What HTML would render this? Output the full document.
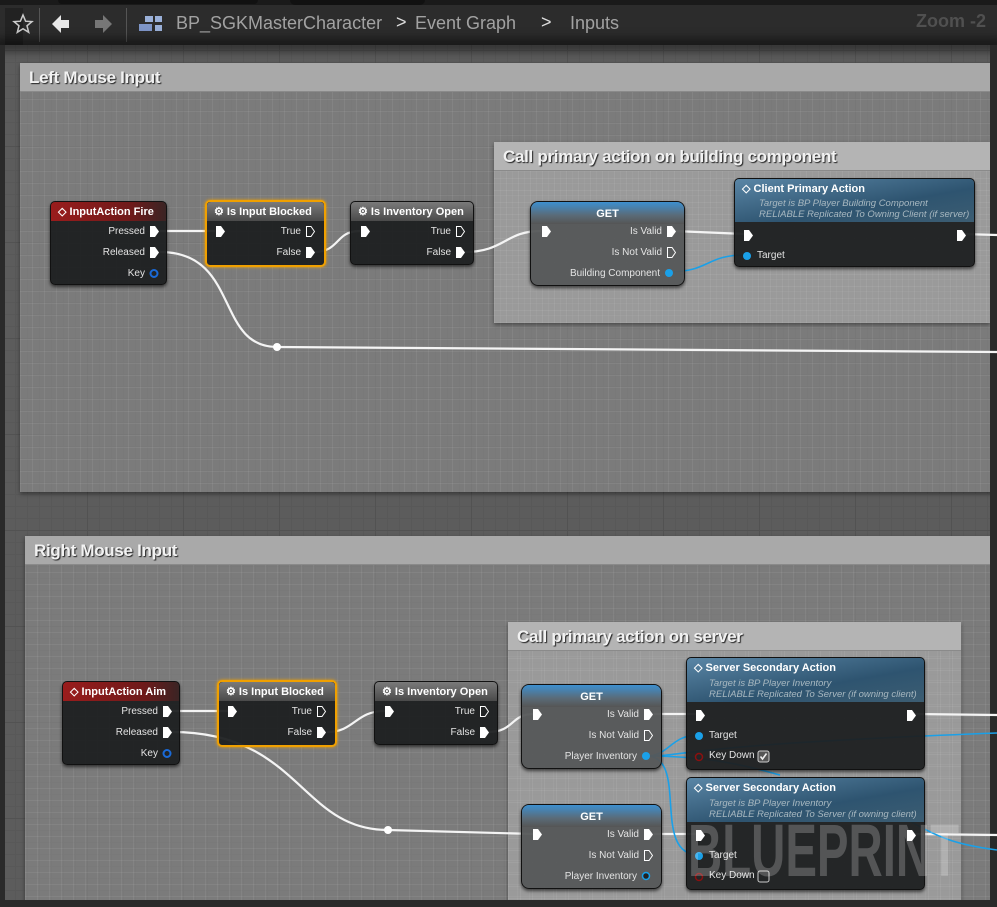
<!DOCTYPE html>
<html><head><meta charset="utf-8"><style>
*{margin:0;padding:0;box-sizing:border-box}
body{width:997px;height:907px;overflow:hidden;background:#1c1c1c;font-family:"Liberation Sans",sans-serif;position:relative}
.abs{position:absolute}
#graph{position:absolute;left:5px;top:45px;width:985px;height:862px;background-color:#5c5c5c;
background-image:linear-gradient(#525252 1px,transparent 1px),linear-gradient(90deg,#525252 1px,transparent 1px),linear-gradient(#585858 1px,transparent 1px),linear-gradient(90deg,#585858 1px,transparent 1px);
background-size:96px 96px,96px 96px,12px 12px,12px 12px;background-position:-14px 5px,-14px 5px,-14px 5px,-14px 5px}
.cm{position:absolute;background-color:rgba(150,150,150,.55);
background-image:linear-gradient(rgba(255,255,255,.06) 1px,transparent 1px),linear-gradient(90deg,rgba(255,255,255,.06) 1px,transparent 1px);background-size:12px 12px;box-shadow:0 2px 4px rgba(0,0,0,.4)}
.cm .ch{position:absolute;left:0;right:0;top:0;height:29px;background:#a9a9a9;border-bottom:1px solid #8a8a8a;color:#f2f2f2;font-weight:bold;font-size:17px;padding:5px 0 0 9px;text-shadow:1px 1px 1px #222;letter-spacing:-0.3px}
.n{position:absolute;background:rgba(30,32,33,.95);border:1px solid #111;border-radius:5px;box-shadow:0 2px 3px rgba(0,0,0,.6);color:#ddd;font-size:10px}
.n .h{height:19px;border-radius:4px 4px 0 0;font-weight:bold;font-size:11px;color:#fff;padding:3px 0 0 7px;white-space:nowrap}
.red{background:linear-gradient(90deg,#9a1c1c,#6e1a1a 70%,#3a2424)}
.gry{background:linear-gradient(#7a7a7a,#4a4a4a)}
.blu{background:linear-gradient(170deg,#5a86a6,#2e5470 60%,#3c5d72)}
.sel{border:2px solid #f0a000;box-shadow:0 0 3px #f0a000}
.get{background:rgba(85,87,88,.95);border-radius:8px}
.get .gh{height:22px;border-radius:7px 7px 0 0;background:linear-gradient(#3d8fcf,#5a6b78 60%,#555);color:#fff;font-weight:bold;font-size:11px;text-align:center;padding-top:6px}
.l{position:absolute;white-space:nowrap;font-size:10px;color:#e4e4e4}
.r{text-align:right}
.sub{position:absolute;font-style:italic;font-size:9.5px;color:#a8b8c0;line-height:11px;white-space:nowrap}
svg.p{position:absolute}
</style></head><body>
<div class="abs" style="left:0;top:0;width:997px;height:45px;background:#2c2c2c"></div>
<div class="abs" style="left:0;top:0;width:997px;height:5px;background:#1a1a1a"></div>
<div class="abs" style="left:58px;top:0;width:200px;height:4px;background:#111;border-radius:0 0 8px 8px"></div>
<div class="abs" style="left:290px;top:0;width:135px;height:5px;background:#111;border-radius:0 0 8px 8px"></div>
<div class="abs" style="left:5px;top:8px;width:18px;height:37px;background:#222"></div>
<svg class="abs" style="left:12px;top:13px" width="22" height="22" viewBox="0 0 22 22"><path d="M11 2 L13.6 8.2 L20 8.6 L15 12.8 L16.7 19.3 L11 15.7 L5.3 19.3 L7 12.8 L2 8.6 L8.4 8.2 Z" fill="none" stroke="#ccc" stroke-width="1.5"/></svg>
<div class="abs" style="left:39px;top:8px;width:1px;height:34px;background:#555"></div>
<svg class="abs" style="left:50px;top:13px" width="22" height="22"><path d="M2 11 L11 2 L11 7 L19 7 L19 15 L11 15 L11 20 Z" fill="#e8e8e8"/></svg>
<svg class="abs" style="left:92px;top:13px" width="22" height="22"><path d="M20 11 L11 2 L11 7 L3 7 L3 15 L11 15 L11 20 Z" fill="#777"/></svg>
<div class="abs" style="left:126px;top:8px;width:1px;height:34px;background:#555"></div>
<svg class="abs" style="left:138px;top:14px" width="26" height="20"><rect x="7" y="2" width="8" height="6" fill="#9ab0d8"/><rect x="17" y="2" width="7" height="6" fill="#9ab0d8"/><rect x="1" y="10" width="13" height="7" fill="#7e96c8"/><rect x="17" y="11" width="7" height="6" fill="#9ab0d8"/></svg>
<div class="abs" style="left:176px;top:13px;font-size:18px;color:#a2a2a2">BP_SGKMasterCharacter</div>
<div class="abs" style="left:396px;top:12px;font-size:18px;color:#ddd">&gt;</div>
<div class="abs" style="left:415px;top:13px;font-size:18px;color:#a2a2a2">Event Graph</div>
<div class="abs" style="left:541px;top:12px;font-size:18px;color:#ddd">&gt;</div>
<div class="abs" style="left:570px;top:13px;font-size:18px;color:#a2a2a2">Inputs</div>

<div id="graph"></div>
<div class="abs" style="left:0;top:45px;width:997px;height:0;box-shadow:0 0 10px 6px rgba(0,0,0,.5)"></div>
<div class="abs" style="left:916px;top:11px;font-size:18px;font-weight:bold;color:#505050">Zoom -2</div>

<div class="cm" style="left:20px;top:63px;width:977px;height:429px"><div class="ch">Left Mouse Input</div></div>
<div class="cm" style="left:494px;top:142px;width:496px;height:181px;background-color:rgba(180,180,180,.55)"><div class="ch" style="background:#b4b4b4">Call primary action on building component</div></div>
<div class="cm" style="left:25px;top:536px;width:965px;height:371px"><div class="ch">Right Mouse Input</div></div>
<div class="cm" style="left:508px;top:622px;width:453px;height:285px;background-color:rgba(180,180,180,.55)"><div class="ch" style="background:#b4b4b4">Call primary action on server</div></div>
<div class="abs" style="left:990px;top:45px;width:7px;height:862px;background:#2a2a2a"></div>
<div class="abs" style="left:0;top:45px;width:5px;height:862px;background:#2a2a2a"></div>
<div class="abs" style="left:0;top:900px;width:997px;height:7px;background:#2a2a2a"></div>

<svg class="abs" style="left:0;top:0;z-index:1" width="997" height="907" fill="none">
<g stroke="#f4f4f4" stroke-width="2.2">
<path d="M160 231 L215 231"/>
<path d="M160 252 C240 252 215 347 277 347 L997 352"/>
<path d="M314 252 C340 252 335 231 360 231"/>
<path d="M464 252 C505 252 505 231 541 231"/>
<path d="M674 231 L745 234"/>
<path d="M962 234 L997 235"/>
<path d="M172 711 L228 711"/>
<path d="M172 732 C300 732 300 830 388 830 L534 834"/>
<path d="M327 732 C355 732 355 711 385 711"/>
<path d="M488 732 C515 732 510 714 534 714"/>
<path d="M654 714 L697 714"/>
<path d="M654 834 L697 834"/>
<path d="M914 714 L997 715"/>
<path d="M914 834 L997 835"/>
</g>
<circle cx="277" cy="347" r="4" fill="#fff"/>
<circle cx="388" cy="830" r="4" fill="#fff"/>
<g stroke="#1aa0e8" stroke-width="1.6">
<path d="M668 272 C710 272 705 255 745 255"/>
<path d="M646 756 C670 756 670 735 699 735"/>
<path d="M646 756 C690 756 680 745 997 733"/>
<path d="M646 756 C690 756 650 855 699 855"/>
<path d="M646 756 C720 756 760 770 780 775"/>
<path d="M900 815 C940 840 960 845 997 850"/>
</g>
</svg>

<div style="position:relative;z-index:2">
<div class="n" style="left:50px;top:201px;width:117px;height:84px"><div class="h red">◇ InputAction Fire</div>
<div class="l r" style="right:21px;top:24px">Pressed</div><div class="l r" style="right:21px;top:45px">Released</div><div class="l r" style="right:21px;top:66px">Key</div>
<svg class="p" style="right:7px;top:24px" width="9" height="11"><path d="M0 0H5L9 5.5L5 11H0Z" fill="#fff"/></svg>
<svg class="p" style="right:7px;top:45px" width="9" height="11"><path d="M0 0H5L9 5.5L5 11H0Z" fill="#fff"/></svg>
<svg class="p" style="right:6px;top:66px" width="11" height="11"><circle cx="5" cy="5.5" r="3.5" stroke="#1a6ad8" stroke-width="2" fill="none"/></svg>
</div>
<div class="n sel" style="left:205px;top:200px;width:121px;height:67px"><div class="h gry">⚙ Is Input Blocked</div>
<svg class="p" style="left:9px;top:24px" width="9" height="11"><path d="M0 0H5L9 5.5L5 11H0Z" fill="#fff"/></svg>
<div class="l r" style="right:23px;top:24px">True</div><div class="l r" style="right:23px;top:45px">False</div>
<svg class="p" style="right:9px;top:24px" width="9" height="11"><path d="M.5 .5H5L8.5 5.5L5 10.5H.5Z" fill="none" stroke="#fff"/></svg>
<svg class="p" style="right:9px;top:45px" width="9" height="11"><path d="M0 0H5L9 5.5L5 11H0Z" fill="#fff"/></svg>
</div>
<div class="n" style="left:350px;top:201px;width:124px;height:64px"><div class="h gry">⚙ Is Inventory Open</div>
<svg class="p" style="left:10px;top:24px" width="9" height="11"><path d="M0 0H5L9 5.5L5 11H0Z" fill="#fff"/></svg>
<div class="l r" style="right:22px;top:24px">True</div><div class="l r" style="right:22px;top:45px">False</div>
<svg class="p" style="right:8px;top:24px" width="9" height="11"><path d="M.5 .5H5L8.5 5.5L5 10.5H.5Z" fill="none" stroke="#fff"/></svg>
<svg class="p" style="right:8px;top:45px" width="9" height="11"><path d="M0 0H5L9 5.5L5 11H0Z" fill="#fff"/></svg>
</div>
<div class="n get" style="left:530px;top:201px;width:155px;height:85px"><div class="gh">GET</div>
<svg class="p" style="left:11px;top:24px" width="9" height="11"><path d="M0 0H5L9 5.5L5 11H0Z" fill="#fff"/></svg>
<div class="l r" style="right:22px;top:24px">Is Valid</div><div class="l r" style="right:22px;top:45px">Is Not Valid</div><div class="l r" style="right:24px;top:66px">Building Component</div>
<svg class="p" style="right:8px;top:24px" width="9" height="11"><path d="M0 0H5L9 5.5L5 11H0Z" fill="#fff"/></svg>
<svg class="p" style="right:8px;top:45px" width="9" height="11"><path d="M.5 .5H5L8.5 5.5L5 10.5H.5Z" fill="none" stroke="#fff"/></svg>
<svg class="p" style="right:10px;top:66px" width="10" height="10"><circle cx="5" cy="5" r="4" fill="#1aa0e8"/></svg>
</div>
<div class="n" style="left:734px;top:178px;width:241px;height:89px"><div class="h blu" style="height:43px">◇ Client Primary Action</div>
<div class="sub" style="left:24px;top:19px">Target is BP Player Building Component<br>RELIABLE Replicated To Owning Client (if server)</div>
<svg class="p" style="left:9px;top:51px" width="9" height="11"><path d="M0 0H5L9 5.5L5 11H0Z" fill="#fff"/></svg>
<svg class="p" style="right:8px;top:51px" width="9" height="11"><path d="M0 0H5L9 5.5L5 11H0Z" fill="#fff"/></svg>
<svg class="p" style="left:7px;top:72px" width="10" height="10"><circle cx="5" cy="5" r="4" fill="#1aa0e8"/></svg>
<div class="l" style="left:22px;top:71px">Target</div>
</div>

<div class="n" style="left:62px;top:681px;width:118px;height:84px"><div class="h red">◇ InputAction Aim</div>
<div class="l r" style="right:21px;top:24px">Pressed</div><div class="l r" style="right:21px;top:45px">Released</div><div class="l r" style="right:21px;top:66px">Key</div>
<svg class="p" style="right:7px;top:24px" width="9" height="11"><path d="M0 0H5L9 5.5L5 11H0Z" fill="#fff"/></svg>
<svg class="p" style="right:7px;top:45px" width="9" height="11"><path d="M0 0H5L9 5.5L5 11H0Z" fill="#fff"/></svg>
<svg class="p" style="right:6px;top:66px" width="11" height="11"><circle cx="5" cy="5.5" r="3.5" stroke="#1a6ad8" stroke-width="2" fill="none"/></svg>
</div>
<div class="n sel" style="left:217px;top:680px;width:120px;height:67px"><div class="h gry">⚙ Is Input Blocked</div>
<svg class="p" style="left:9px;top:24px" width="9" height="11"><path d="M0 0H5L9 5.5L5 11H0Z" fill="#fff"/></svg>
<div class="l r" style="right:23px;top:24px">True</div><div class="l r" style="right:23px;top:45px">False</div>
<svg class="p" style="right:9px;top:24px" width="9" height="11"><path d="M.5 .5H5L8.5 5.5L5 10.5H.5Z" fill="none" stroke="#fff"/></svg>
<svg class="p" style="right:9px;top:45px" width="9" height="11"><path d="M0 0H5L9 5.5L5 11H0Z" fill="#fff"/></svg>
</div>
<div class="n" style="left:374px;top:681px;width:124px;height:64px"><div class="h gry">⚙ Is Inventory Open</div>
<svg class="p" style="left:10px;top:24px" width="9" height="11"><path d="M0 0H5L9 5.5L5 11H0Z" fill="#fff"/></svg>
<div class="l r" style="right:22px;top:24px">True</div><div class="l r" style="right:22px;top:45px">False</div>
<svg class="p" style="right:8px;top:24px" width="9" height="11"><path d="M.5 .5H5L8.5 5.5L5 10.5H.5Z" fill="none" stroke="#fff"/></svg>
<svg class="p" style="right:8px;top:45px" width="9" height="11"><path d="M0 0H5L9 5.5L5 11H0Z" fill="#fff"/></svg>
</div>
<div class="n get" style="left:521px;top:684px;width:141px;height:85px"><div class="gh">GET</div>
<svg class="p" style="left:11px;top:24px" width="9" height="11"><path d="M0 0H5L9 5.5L5 11H0Z" fill="#fff"/></svg>
<div class="l r" style="right:22px;top:24px">Is Valid</div><div class="l r" style="right:22px;top:45px">Is Not Valid</div><div class="l r" style="right:24px;top:66px">Player Inventory</div>
<svg class="p" style="right:8px;top:24px" width="9" height="11"><path d="M0 0H5L9 5.5L5 11H0Z" fill="#fff"/></svg>
<svg class="p" style="right:8px;top:45px" width="9" height="11"><path d="M.5 .5H5L8.5 5.5L5 10.5H.5Z" fill="none" stroke="#fff"/></svg>
<svg class="p" style="right:10px;top:66px" width="10" height="10"><circle cx="5" cy="5" r="4" fill="#1aa0e8"/></svg>
</div>
<div class="n get" style="left:521px;top:804px;width:141px;height:85px"><div class="gh">GET</div>
<svg class="p" style="left:11px;top:24px" width="9" height="11"><path d="M0 0H5L9 5.5L5 11H0Z" fill="#fff"/></svg>
<div class="l r" style="right:22px;top:24px">Is Valid</div><div class="l r" style="right:22px;top:45px">Is Not Valid</div><div class="l r" style="right:24px;top:66px">Player Inventory</div>
<svg class="p" style="right:8px;top:24px" width="9" height="11"><path d="M0 0H5L9 5.5L5 11H0Z" fill="#fff"/></svg>
<svg class="p" style="right:8px;top:45px" width="9" height="11"><path d="M.5 .5H5L8.5 5.5L5 10.5H.5Z" fill="none" stroke="#fff"/></svg>
<svg class="p" style="right:10px;top:66px" width="10" height="10"><circle cx="5" cy="5" r="3.5" fill="#222" stroke="#1aa0e8" stroke-width="1.5"/></svg>
</div>
<div class="n" style="left:686px;top:657px;width:239px;height:113px"><div class="h blu" style="height:44px">◇ Server Secondary Action</div>
<div class="sub" style="left:22px;top:20px">Target is BP Player Inventory<br>RELIABLE Replicated To Server (if owning client)</div>
<svg class="p" style="left:9px;top:52px" width="9" height="11"><path d="M0 0H5L9 5.5L5 11H0Z" fill="#fff"/></svg>
<svg class="p" style="right:8px;top:52px" width="9" height="11"><path d="M0 0H5L9 5.5L5 11H0Z" fill="#fff"/></svg>
<svg class="p" style="left:7px;top:73px" width="10" height="10"><circle cx="5" cy="5" r="4" fill="#1aa0e8"/></svg>
<div class="l" style="left:22px;top:72px">Target</div>
<svg class="p" style="left:7px;top:94px" width="10" height="10"><circle cx="5" cy="5" r="3.5" fill="none" stroke="#8a1010" stroke-width="1.5"/></svg>
<div class="l" style="left:22px;top:92px">Key Down</div>
<svg class="p" style="left:70px;top:92px" width="13" height="13"><rect x="1" y="1" width="11" height="11" rx="2" fill="#555" stroke="#ccc"/><path d="M3.5 6.5L5.5 9L9.5 3.5" stroke="#eee" stroke-width="1.6" fill="none"/></svg>
</div>
<div class="n" style="left:686px;top:777px;width:239px;height:113px"><div class="h blu" style="height:44px">◇ Server Secondary Action</div>
<div class="sub" style="left:22px;top:20px">Target is BP Player Inventory<br>RELIABLE Replicated To Server (if owning client)</div>
<svg class="p" style="left:9px;top:52px" width="9" height="11"><path d="M0 0H5L9 5.5L5 11H0Z" fill="#fff"/></svg>
<svg class="p" style="right:8px;top:52px" width="9" height="11"><path d="M0 0H5L9 5.5L5 11H0Z" fill="#fff"/></svg>
<svg class="p" style="left:7px;top:73px" width="10" height="10"><circle cx="5" cy="5" r="4" fill="#1aa0e8"/></svg>
<div class="l" style="left:22px;top:72px">Target</div>
<svg class="p" style="left:7px;top:94px" width="10" height="10"><circle cx="5" cy="5" r="3.5" fill="none" stroke="#8a1010" stroke-width="1.5"/></svg>
<div class="l" style="left:22px;top:92px">Key Down</div>
<svg class="p" style="left:70px;top:92px" width="13" height="13"><rect x="1" y="1" width="11" height="11" rx="2" fill="none" stroke="#ccc"/></svg>
</div>
</div>
<div class="abs" style="left:688px;top:814px;z-index:3;font-size:74px;font-weight:bold;color:rgba(255,255,255,.22);line-height:74px;transform:scaleX(.64);transform-origin:left;white-space:nowrap">BLUEPRINT</div>
</body></html>
